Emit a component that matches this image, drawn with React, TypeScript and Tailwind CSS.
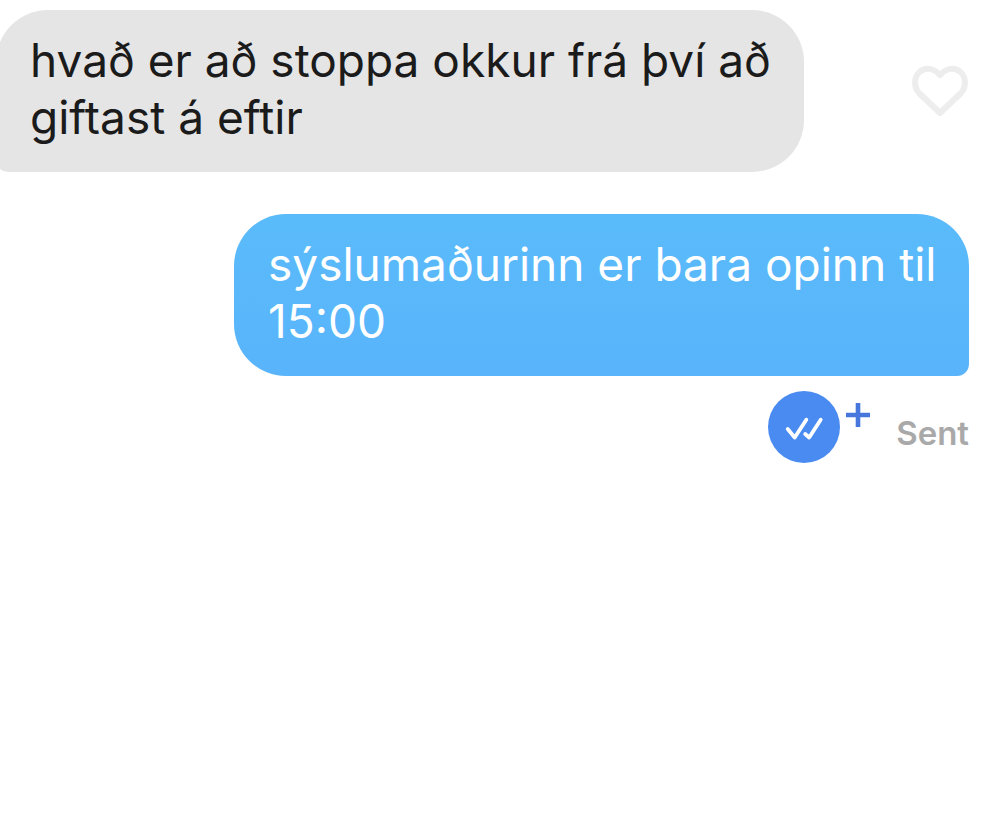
type BubbleProps = {
  text: string;
  mine?: boolean;
};

function Bubble({ text, mine = false }: BubbleProps) {
  return (
    <p
      className={
        mine
          ? "max-w-[735px] rounded-[52px] rounded-br-xl bg-linear-to-b from-[#5abbfa] to-[#59b4fb] pt-[22px] pr-7 pb-[26px] pl-[34px] text-white"
          : "-ml-1 max-w-[808px] rounded-[52px] rounded-bl-xl bg-[#e5e5e5] pt-[22px] pr-7 pb-[26px] pl-[34px] text-[#1b1b1b]"
      }
    >
      {text}
    </p>
  );
}

function LikeButton() {
  return (
    <button type="button" aria-label="Like message" className="shrink-0">
      <svg width="58" height="52" viewBox="0 0 58 52" fill="none" className="block">
        <path
          d="M29 48L8.500 28.500C3 23 2.500 13 8 7.500C13.500 2 22.500 2.500 29 10C35.500 2.500 44.500 2 50 7.500C55.500 13 55 23 49.500 28.500Z"
          stroke="#ededed"
          strokeWidth="6"
          strokeLinejoin="round"
        />
      </svg>
    </button>
  );
}

function ReadReceiptButton() {
  return (
    <button type="button" aria-label="Read receipts" className="flex items-start gap-1">
      <svg width="72" height="72" viewBox="0 0 72 72" fill="none" className="block">
        <circle cx="36" cy="36" r="36" fill="#4a8bf2" />
        <path
          d="M19.700 38L26.700 46.500L38.300 28.700M37.200 43L41.200 46.500L52.700 28.700"
          stroke="white"
          strokeWidth="3.800"
          strokeLinecap="round"
          strokeLinejoin="round"
        />
      </svg>
      <svg width="28" height="48" viewBox="0 0 28 48" fill="none" className="block">
        <path d="M14 12V36M2 24H26" stroke="#4777dd" strokeWidth="4.600" />
      </svg>
    </button>
  );
}

export default function App() {
  return (
    <main className="min-h-screen overflow-hidden bg-white pt-[10px] pr-9 font-[Inter,sans-serif] text-[46px] leading-[57px]">
      <div className="flex items-center justify-between">
        <Bubble text="hvað er að stoppa okkur frá því að giftast á eftir" />
        <LikeButton />
      </div>
      <div className="mt-[42px] flex justify-end">
        <Bubble mine text="sýslumaðurinn er bara opinn til 15:00" />
      </div>
      <div className="mt-[15px] flex items-start justify-end gap-6">
        <ReadReceiptButton />
        <span className="pt-5 text-[33px] leading-[44px] font-semibold text-[#a9a9a9]">Sent</span>
      </div>
    </main>
  );
}
